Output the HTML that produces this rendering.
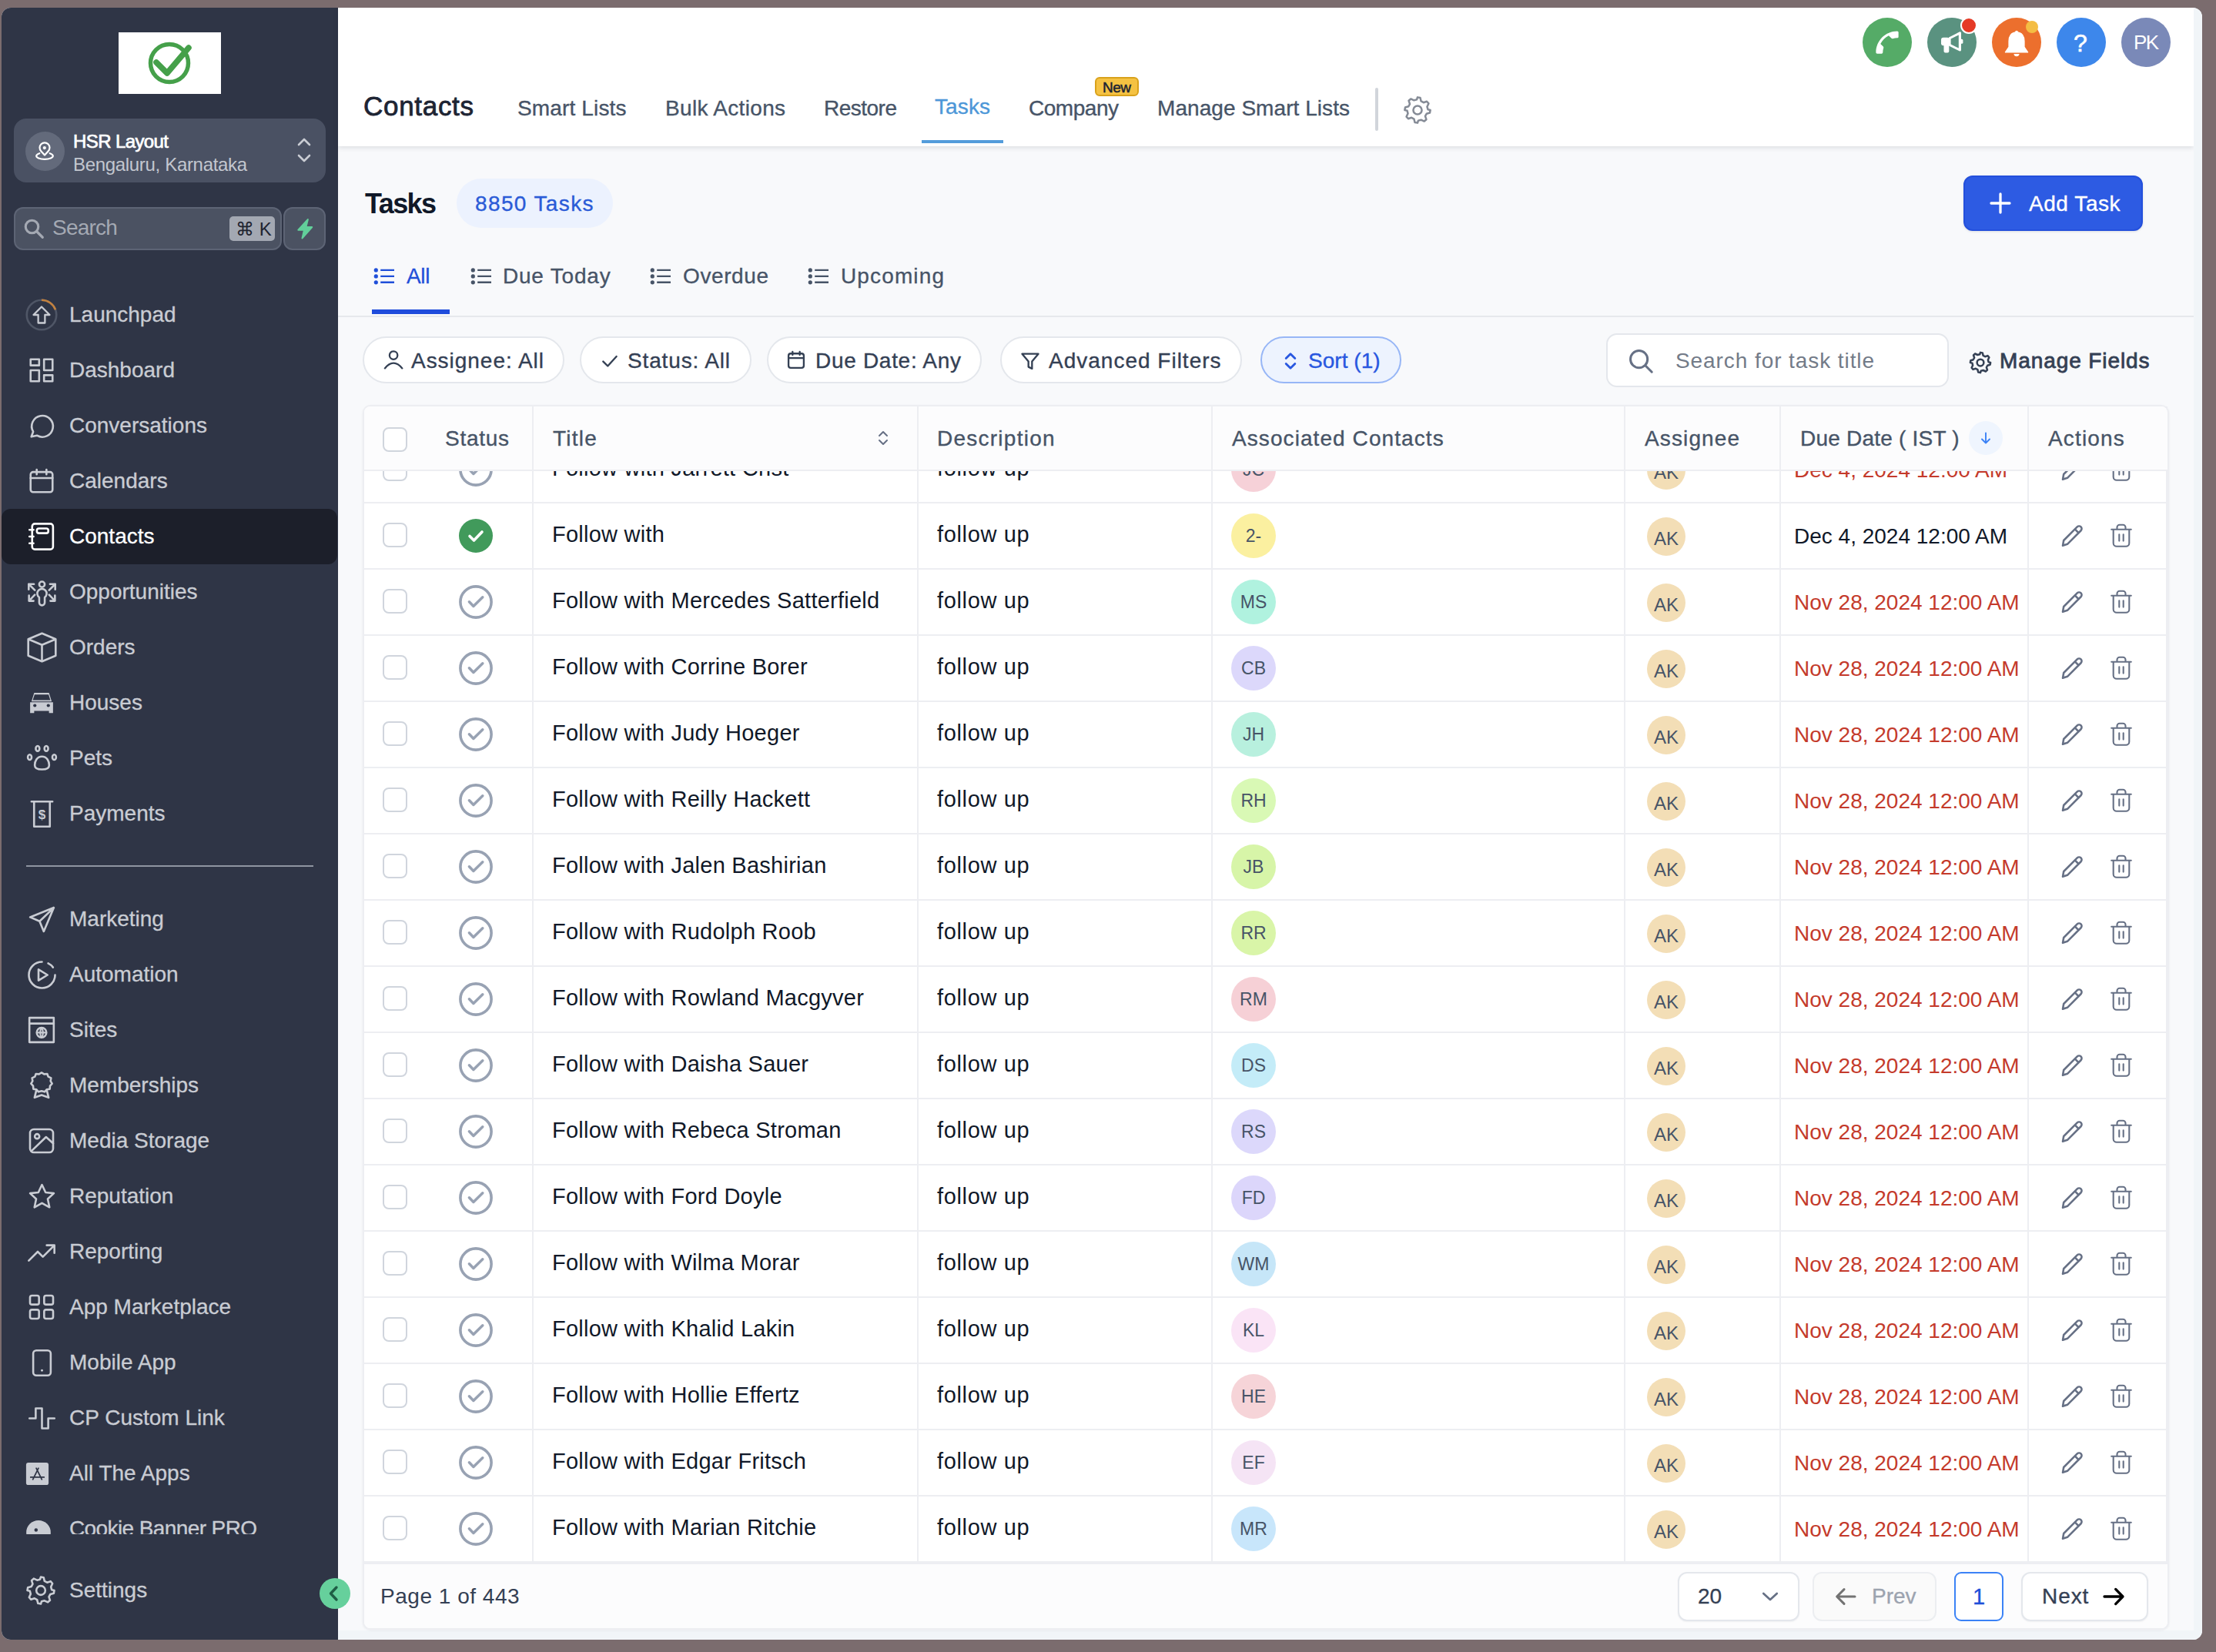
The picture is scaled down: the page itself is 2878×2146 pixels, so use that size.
<!DOCTYPE html>
<html><head><meta charset="utf-8"><title>Tasks</title>
<style>
*{box-sizing:border-box;margin:0;padding:0}
html,body{width:2878px;height:2146px;overflow:hidden;background:#7b6c6e;font-family:"Liberation Sans", sans-serif}
.win{position:absolute;left:2px;top:10px;width:2858px;height:2120px;border-radius:12px;overflow:hidden;background:#f8f9fb}
.in{position:absolute;left:-2px;top:-10px;width:2878px;height:2146px}
.b{position:absolute}
.t{position:absolute;white-space:nowrap}
svg.b{overflow:visible}
</style></head><body>
<div class="win"><div class="in">
<div class="b" style="left:2px;top:10px;width:437px;height:2120px;background:#2f3546"></div><div class="b" style="left:154px;top:42px;width:133px;height:80px;background:#fff"></div><svg class="b" style="left:186px;top:52px;" width="68" height="60" viewBox="0 0 68 60" fill="none"><circle cx="34" cy="30" r="24.5" stroke="#45a04a" stroke-width="5.5"/><path d="M17 29 L31 43 L59 10" stroke="#45a04a" stroke-width="7.5" stroke-linecap="round" stroke-linejoin="round"/></svg><div class="b" style="left:18px;top:154px;width:405px;height:83px;background:#4a5163;border-radius:16px"></div><div class="b" style="left:33px;top:171px;width:51px;height:51px;background:#636a7b;border-radius:50%"></div><svg class="b" style="left:33px;top:170px;" width="51" height="51" viewBox="0 0 51 51" fill="none"><path d="M25 31.5 L20.4 26.4 A6.5 6.5 0 1 1 29.6 26.4 Z" stroke="#fff" stroke-width="2.2" stroke-linejoin="round"/><circle cx="24.8" cy="22.1" r="2.1" fill="#fff"/><path d="M18.3 29.2 A10.8 4.3 0 1 0 31.7 29.2" stroke="#fff" stroke-width="2.2" stroke-linecap="round"/></svg><div class="t" style="left:95px;top:171.7px;font-size:24px;line-height:24px;color:#ffffff;font-weight:400;letter-spacing:-0.6px;-webkit-text-stroke:0.7px #ffffff;">HSR Layout</div><div class="t" style="left:95px;top:201.7px;font-size:24px;line-height:24px;color:#c3c7cf;font-weight:400;letter-spacing:-0.32px;">Bengaluru, Karnataka</div><svg class="b" style="left:384px;top:175px;" width="22" height="40" viewBox="0 0 22 40" fill="none"><path d="M4 13 L11 6 L18 13" stroke="#c9ccd3" stroke-width="2.6" stroke-linecap="round" stroke-linejoin="round"/><path d="M4 27 L11 34 L18 27" stroke="#c9ccd3" stroke-width="2.6" stroke-linecap="round" stroke-linejoin="round"/></svg><div class="b" style="left:18px;top:269px;width:348px;height:56px;background:#4b5262;border:2px solid #5d6475;border-radius:12px"></div><svg class="b" style="left:29px;top:282px;" width="30" height="30" viewBox="0 0 24 24" fill="none"><circle cx="10" cy="10" r="6.6" stroke="#a4a9b3" stroke-width="2.5"/><path d="M15 15 L21 21" stroke="#a4a9b3" stroke-width="2.6" stroke-linecap="round"/></svg><div class="t" style="left:68px;top:282.3px;font-size:28px;line-height:28px;color:#a4a9b3;font-weight:400;letter-spacing:-0.8px;">Search</div><div class="b" style="left:298px;top:281px;width:59px;height:32px;background:#a3a8b2;border-radius:5px"></div><div class="t" style="left:306px;top:285.7px;font-size:24px;line-height:24px;color:#1f2430;font-weight:400;letter-spacing:0px;">&#8984; K</div><div class="b" style="left:368px;top:269px;width:55px;height:56px;background:#4b5262;border:2px solid #5d6475;border-radius:12px"></div><svg class="b" style="left:383px;top:283px;" width="26" height="28" viewBox="0 0 24 26" fill="none"><path d="M15.5 2 L4 14.5 H11.2 L8.8 24.5 L20.5 11.2 H13.2 Z" fill="#62cf9a" stroke="#62cf9a" stroke-width="2" stroke-linejoin="round"/></svg><div class="b" style="left:2px;top:661px;width:436px;height:72px;background:#1c1f2a;border-radius:12px"></div><svg class="b" style="left:33.0px;top:388.0px;" width="42" height="42" viewBox="0 0 24 24" fill="none"><circle cx="12" cy="12" r="11" stroke="#4f5666" stroke-width="1.5"/><path d="M12 1 A11 11 0 0 1 22.3 8.2" stroke="#c2813f" stroke-width="1.5"/><path d="M12 6 L18 12 H14.5 V18 H9.5 V12 H6 Z" stroke="#c9ccd3" stroke-width="1.3" stroke-linejoin="round"/></svg><div class="t" style="left:90px;top:395.3px;font-size:28px;line-height:28px;color:#c9ccd3;font-weight:400;letter-spacing:0px;-webkit-text-stroke:0.3px #c9ccd3;">Launchpad</div><svg class="b" style="left:35.0px;top:462.0px;" width="38" height="38" viewBox="0 0 24 24" fill="none"><rect x="3" y="3" width="7" height="5" stroke="#c9ccd3" stroke-width="1.64" stroke-linecap="round" stroke-linejoin="round"/><rect x="14" y="3" width="7" height="9" stroke="#c9ccd3" stroke-width="1.64" stroke-linecap="round" stroke-linejoin="round"/><rect x="3" y="12" width="7" height="9" stroke="#c9ccd3" stroke-width="1.64" stroke-linecap="round" stroke-linejoin="round"/><rect x="14" y="16" width="7" height="5" stroke="#c9ccd3" stroke-width="1.64" stroke-linecap="round" stroke-linejoin="round"/></svg><div class="t" style="left:90px;top:467.3px;font-size:28px;line-height:28px;color:#c9ccd3;font-weight:400;letter-spacing:0px;-webkit-text-stroke:0.3px #c9ccd3;">Dashboard</div><svg class="b" style="left:34.5px;top:533.5px;" width="39" height="39" viewBox="0 0 24 24" fill="none"><path d="M3.5 20.5 L5 16.5 A8.5 8.5 0 1 1 8 19.5 Z" stroke="#c9ccd3" stroke-width="1.6" stroke-linecap="round" stroke-linejoin="round"/></svg><div class="t" style="left:90px;top:539.3px;font-size:28px;line-height:28px;color:#c9ccd3;font-weight:400;letter-spacing:0px;-webkit-text-stroke:0.3px #c9ccd3;">Conversations</div><svg class="b" style="left:35.0px;top:606.0px;" width="38" height="38" viewBox="0 0 24 24" fill="none"><rect x="3" y="4.5" width="18" height="16.5" rx="2" stroke="#c9ccd3" stroke-width="1.64" stroke-linecap="round" stroke-linejoin="round"/><path d="M3 9.5 H21 M8 2.5 V6.5 M16 2.5 V6.5" stroke="#c9ccd3" stroke-width="1.64" stroke-linecap="round" stroke-linejoin="round"/></svg><div class="t" style="left:90px;top:611.3px;font-size:28px;line-height:28px;color:#c9ccd3;font-weight:400;letter-spacing:0px;-webkit-text-stroke:0.3px #c9ccd3;">Calendars</div><svg class="b" style="left:33.0px;top:676.0px;" width="42" height="42" viewBox="0 0 24 24" fill="none"><rect x="5" y="2.5" width="15.5" height="19" rx="2" stroke="#ffffff" stroke-width="1.49" stroke-linecap="round" stroke-linejoin="round"/><rect x="8.5" y="6" width="8.5" height="3.5" rx="1.5" stroke="#ffffff" stroke-width="1.49" stroke-linecap="round" stroke-linejoin="round"/><path d="M3 7 H6 M3 12 H6 M3 17 H6" stroke="#ffffff" stroke-width="1.49" stroke-linecap="round" stroke-linejoin="round"/></svg><div class="t" style="left:90px;top:683.3px;font-size:28px;line-height:28px;color:#ffffff;font-weight:400;letter-spacing:0px;-webkit-text-stroke:0.3px #ffffff;">Contacts</div><svg class="b" style="left:32.5px;top:747.5px;" width="43" height="43" viewBox="0 0 24 24" fill="none"><circle cx="12" cy="6.2" r="2" stroke="#c9ccd3" stroke-width="1.45" stroke-linecap="round" stroke-linejoin="round"/><path d="M10 15.6 A3.4 3.4 0 1 1 14 15.6 V19.4 A2 2 0 0 1 10 19.4 Z" stroke="#c9ccd3" stroke-width="1.45" stroke-linecap="round" stroke-linejoin="round"/><path d="M12 14.2 V19" stroke="#2f3546" stroke-width="0.9"/><path d="M2.4 6 L6.8 10.4 M2.4 9.9 V6 H6.2 M21.6 6 L17.2 10.4 M21.6 9.9 V6 H17.8 M2.6 18.2 L6.8 13.8 M2.6 14.2 V18.2 H5.9 M21.4 18.2 L17.2 13.8 M21.4 14.2 V18.2 H18.1" stroke="#c9ccd3" stroke-width="1.45" stroke-linecap="round" stroke-linejoin="round"/></svg><div class="t" style="left:90px;top:755.3px;font-size:28px;line-height:28px;color:#c9ccd3;font-weight:400;letter-spacing:0px;-webkit-text-stroke:0.3px #c9ccd3;">Opportunities</div><svg class="b" style="left:31.5px;top:818.5px;" width="45" height="45" viewBox="0 0 24 24" fill="none"><path d="M12 2 L21.5 6 V17.5 L12 21.5 L2.5 17.5 V6 Z M2.5 6 L12 10 L21.5 6 M12 10 V21.5" stroke="#c9ccd3" stroke-width="1.39" stroke-linecap="round" stroke-linejoin="round"/></svg><div class="t" style="left:90px;top:827.3px;font-size:28px;line-height:28px;color:#c9ccd3;font-weight:400;letter-spacing:0px;-webkit-text-stroke:0.3px #c9ccd3;">Orders</div><svg class="b" style="left:33.0px;top:892.0px;" width="42" height="42" viewBox="0 0 24 24" fill="none"><path d="M4.5 11 L6.5 4.5 H17.5 L19.5 11 Z" fill="#c9ccd3"/><path d="M3.5 11.5 H20.5 V19.5 H17.5 V18 H6.5 V19.5 H3.5 Z" fill="#c9ccd3"/><path d="M6.8 5.8 H17.2 L18.5 10 H5.5 Z" fill="#2f3546"/><circle cx="7" cy="14" r="1.2" fill="#2f3546"/><circle cx="17" cy="14" r="1.2" fill="#2f3546"/></svg><div class="t" style="left:90px;top:899.3px;font-size:28px;line-height:28px;color:#c9ccd3;font-weight:400;letter-spacing:0px;-webkit-text-stroke:0.3px #c9ccd3;">Houses</div><svg class="b" style="left:31.5px;top:962.5px;" width="45" height="45" viewBox="0 0 24 24" fill="none"><ellipse cx="9" cy="5" rx="1.3" ry="1.8" stroke="#c9ccd3" stroke-width="1.39" stroke-linecap="round" stroke-linejoin="round"/><ellipse cx="15" cy="5" rx="1.3" ry="1.8" stroke="#c9ccd3" stroke-width="1.39" stroke-linecap="round" stroke-linejoin="round"/><ellipse cx="3.5" cy="11" rx="1.3" ry="1.8" stroke="#c9ccd3" stroke-width="1.39" stroke-linecap="round" stroke-linejoin="round"/><ellipse cx="20.5" cy="11" rx="1.3" ry="1.8" stroke="#c9ccd3" stroke-width="1.39" stroke-linecap="round" stroke-linejoin="round"/><path d="M12 10.5 C8.5 10.5 7 14 7 16.5 C7 18.5 9 19.5 12 19.5 C15 19.5 17 18.5 17 16.5 C17 14 15.5 10.5 12 10.5 Z" stroke="#c9ccd3" stroke-width="1.39" stroke-linecap="round" stroke-linejoin="round"/></svg><div class="t" style="left:90px;top:971.3px;font-size:28px;line-height:28px;color:#c9ccd3;font-weight:400;letter-spacing:0px;-webkit-text-stroke:0.3px #c9ccd3;">Pets</div><svg class="b" style="left:33.5px;top:1036.5px;" width="41" height="41" viewBox="0 0 24 24" fill="none"><path d="M4 2.5 H20 M6 2.5 V21.5 H18 V2.5" stroke="#c9ccd3" stroke-width="1.52" stroke-linecap="round" stroke-linejoin="round"/><text x="12" y="16" text-anchor="middle" font-size="10" font-weight="700" fill="#c9ccd3" font-family="Liberation Sans">$</text></svg><div class="t" style="left:90px;top:1043.3px;font-size:28px;line-height:28px;color:#c9ccd3;font-weight:400;letter-spacing:0px;-webkit-text-stroke:0.3px #c9ccd3;">Payments</div><div class="b" style="left:34px;top:1124px;width:373px;height:2px;background:#8f95a1"></div><div class="b" style="left:0;top:0;width:439px;height:1993px;overflow:hidden"><svg class="b" style="left:35.5px;top:1175.5px;" width="37" height="37" viewBox="0 0 24 24" fill="none"><path d="M22 2 L2 10 L10 13.5 L13.5 22 Z M10 13.5 L22 2" stroke="#c9ccd3" stroke-width="1.69" stroke-linecap="round" stroke-linejoin="round"/></svg><div class="t" style="left:90px;top:1180.3px;font-size:28px;line-height:28px;color:#c9ccd3;font-weight:400;letter-spacing:0px;-webkit-text-stroke:0.3px #c9ccd3;">Marketing</div><svg class="b" style="left:32.5px;top:1244.5px;" width="43" height="43" viewBox="0 0 24 24" fill="none"><path d="M21.5 12 A9.5 9.5 0 1 1 12 2.5" stroke="#c9ccd3" stroke-width="1.45" stroke-linecap="round" stroke-linejoin="round"/><path d="M16.5 3.6 A9.5 9.5 0 0 1 20 6.5" stroke="#c9ccd3" stroke-width="1.45" stroke-linecap="round" stroke-linejoin="round"/><path d="M9.5 8 L16 12 L9.5 16 Z" stroke="#c9ccd3" stroke-width="1.45" stroke-linecap="round" stroke-linejoin="round"/></svg><div class="t" style="left:90px;top:1252.3px;font-size:28px;line-height:28px;color:#c9ccd3;font-weight:400;letter-spacing:0px;-webkit-text-stroke:0.3px #c9ccd3;">Automation</div><svg class="b" style="left:34.0px;top:1318.0px;" width="40" height="40" viewBox="0 0 24 24" fill="none"><rect x="2.5" y="2.5" width="19" height="19" stroke="#c9ccd3" stroke-width="1.56" stroke-linecap="round" stroke-linejoin="round"/><path d="M2.5 7 H21.5" stroke="#c9ccd3" stroke-width="1.56" stroke-linecap="round" stroke-linejoin="round"/><circle cx="12" cy="14" r="3.8" stroke="#c9ccd3" stroke-width="1.5"/><path d="M8.2 14 H15.8 M12 10.2 C10.5 12 10.5 16 12 17.8 C13.5 16 13.5 12 12 10.2" stroke="#c9ccd3" stroke-width="1.3"/></svg><div class="t" style="left:90px;top:1324.3px;font-size:28px;line-height:28px;color:#c9ccd3;font-weight:400;letter-spacing:0px;-webkit-text-stroke:0.3px #c9ccd3;">Sites</div><svg class="b" style="left:34.0px;top:1390.0px;" width="40" height="40" viewBox="0 0 24 24" fill="none"><path d="M12 2 L14 3.2 L16.4 3 L17.2 5.2 L19.4 6.2 L19 8.6 L20.2 10.6 L18.6 12.4 L18.4 14.8 L16 15.2 L14.4 17 L12 16.4 L9.6 17 L8 15.2 L5.6 14.8 L5.4 12.4 L3.8 10.6 L5 8.6 L4.6 6.2 L6.8 5.2 L7.6 3 L10 3.2 Z" stroke="#c9ccd3" stroke-width="1.56" stroke-linecap="round" stroke-linejoin="round"/><path d="M8 15.5 L6.5 21.5 L12 19.5 L17.5 21.5 L16 15.5" stroke="#c9ccd3" stroke-width="1.56" stroke-linecap="round" stroke-linejoin="round"/></svg><div class="t" style="left:90px;top:1396.3px;font-size:28px;line-height:28px;color:#c9ccd3;font-weight:400;letter-spacing:0px;-webkit-text-stroke:0.3px #c9ccd3;">Memberships</div><svg class="b" style="left:34.0px;top:1462.0px;" width="40" height="40" viewBox="0 0 24 24" fill="none"><rect x="3" y="3" width="18" height="18" rx="3" stroke="#c9ccd3" stroke-width="1.56" stroke-linecap="round" stroke-linejoin="round"/><circle cx="8.5" cy="8.5" r="1.8" stroke="#c9ccd3" stroke-width="1.56" stroke-linecap="round" stroke-linejoin="round"/><path d="M4 20 L15.5 9 L21 14" stroke="#c9ccd3" stroke-width="1.56" stroke-linecap="round" stroke-linejoin="round"/></svg><div class="t" style="left:90px;top:1468.3px;font-size:28px;line-height:28px;color:#c9ccd3;font-weight:400;letter-spacing:0px;-webkit-text-stroke:0.3px #c9ccd3;">Media Storage</div><svg class="b" style="left:34.5px;top:1534.5px;" width="39" height="39" viewBox="0 0 24 24" fill="none"><path d="M12 2.5 L14.9 8.6 L21.5 9.3 L16.6 13.8 L18 20.5 L12 17.1 L6 20.5 L7.4 13.8 L2.5 9.3 L9.1 8.6 Z" stroke="#c9ccd3" stroke-width="1.6" stroke-linecap="round" stroke-linejoin="round"/></svg><div class="t" style="left:90px;top:1540.3px;font-size:28px;line-height:28px;color:#c9ccd3;font-weight:400;letter-spacing:0px;-webkit-text-stroke:0.3px #c9ccd3;">Reputation</div><svg class="b" style="left:34.0px;top:1606.0px;" width="40" height="40" viewBox="0 0 24 24" fill="none"><path d="M2 19 L9 12 L13 16 L22 7 M16 7 H22 V13" stroke="#c9ccd3" stroke-width="1.56" stroke-linecap="round" stroke-linejoin="round"/></svg><div class="t" style="left:90px;top:1612.3px;font-size:28px;line-height:28px;color:#c9ccd3;font-weight:400;letter-spacing:0px;-webkit-text-stroke:0.3px #c9ccd3;">Reporting</div><svg class="b" style="left:34.0px;top:1678.0px;" width="40" height="40" viewBox="0 0 24 24" fill="none"><rect x="3" y="3" width="7" height="7" rx="1.5" stroke="#c9ccd3" stroke-width="1.56" stroke-linecap="round" stroke-linejoin="round"/><rect x="14" y="3" width="7" height="7" rx="1.5" stroke="#c9ccd3" stroke-width="1.56" stroke-linecap="round" stroke-linejoin="round"/><rect x="3" y="14" width="7" height="7" rx="1.5" stroke="#c9ccd3" stroke-width="1.56" stroke-linecap="round" stroke-linejoin="round"/><rect x="14" y="14" width="7" height="7" rx="1.5" stroke="#c9ccd3" stroke-width="1.56" stroke-linecap="round" stroke-linejoin="round"/></svg><div class="t" style="left:90px;top:1684.3px;font-size:28px;line-height:28px;color:#c9ccd3;font-weight:400;letter-spacing:0px;-webkit-text-stroke:0.3px #c9ccd3;">App Marketplace</div><svg class="b" style="left:34.5px;top:1750.5px;" width="39" height="39" viewBox="0 0 24 24" fill="none"><rect x="5" y="2" width="14" height="20" rx="2.5" stroke="#c9ccd3" stroke-width="1.6" stroke-linecap="round" stroke-linejoin="round"/><circle cx="12" cy="18" r="0.9" fill="#c9ccd3"/></svg><div class="t" style="left:90px;top:1756.3px;font-size:28px;line-height:28px;color:#c9ccd3;font-weight:400;letter-spacing:0px;-webkit-text-stroke:0.3px #c9ccd3;">Mobile App</div><svg class="b" style="left:34.5px;top:1822.5px;" width="39" height="39" viewBox="0 0 24 24" fill="none"><path d="M2 12 H7 V4 H12 V20 H17 V12 H22" stroke="#c9ccd3" stroke-width="1.6" stroke-linecap="round" stroke-linejoin="round"/></svg><div class="t" style="left:90px;top:1828.3px;font-size:28px;line-height:28px;color:#c9ccd3;font-weight:400;letter-spacing:0px;-webkit-text-stroke:0.3px #c9ccd3;">CP Custom Link</div><svg class="b" style="left:30.5px;top:1896.5px;" width="35" height="35" viewBox="0 0 24 24" fill="none"><rect x="2" y="2" width="20" height="20" rx="2" fill="#c9ccd3"/><path d="M8 17 L13 7 M11 7 L16 17 M6 15 H18" stroke="#2f3546" stroke-width="1.2" stroke-linecap="round"/></svg><div class="t" style="left:90px;top:1900.3px;font-size:28px;line-height:28px;color:#c9ccd3;font-weight:400;letter-spacing:0px;-webkit-text-stroke:0.3px #c9ccd3;">All The Apps</div><svg class="b" style="left:31.0px;top:1967.0px;" width="38" height="38" viewBox="0 0 24 24" fill="none"><circle cx="12" cy="15" r="10" fill="#c9ccd3"/><circle cx="10" cy="13" r="1.4" fill="#2f3546"/><circle cx="16" cy="18" r="1.4" fill="#2f3546"/><circle cx="7" cy="19.5" r="1.3" fill="#2f3546"/></svg><div class="t" style="left:90px;top:1972.3px;font-size:28px;line-height:28px;color:#c9ccd3;font-weight:400;letter-spacing:-0.6px;-webkit-text-stroke:0.3px #c9ccd3;">Cookie Banner PRO</div></div><svg class="b" style="left:33.0px;top:2046.0px;" width="40" height="40" viewBox="0 0 24 24" fill="none"><path d="M12 1.5 L14.2 1.9 L14.9 4.7 L16.9 5.8 L19.6 4.9 L21.1 6.6 L19.9 9.2 L20.5 11.5 L22.5 12 L22.1 14.2 L19.4 15 L18.3 17 L19.2 19.7 L17.5 21.2 L14.9 20 L12.6 20.6 L12 22.5 L9.8 22.1 L9.1 19.3 L7.1 18.2 L4.4 19.1 L2.9 17.4 L4.1 14.8 L3.5 12.5 L1.5 12 L1.9 9.8 L4.6 9 L5.7 7 L4.8 4.3 L6.5 2.8 L9.1 4 L11.4 3.4 Z" stroke="#c9ccd3" stroke-width="1.56" stroke-linecap="round" stroke-linejoin="round"/><circle cx="12" cy="12" r="3.5" stroke="#c9ccd3" stroke-width="1.56" stroke-linecap="round" stroke-linejoin="round"/></svg><div class="t" style="left:90px;top:2052.3px;font-size:28px;line-height:28px;color:#c9ccd3;font-weight:400;letter-spacing:0px;-webkit-text-stroke:0.3px #c9ccd3;">Settings</div><div class="b" style="left:439px;top:10px;width:2410px;height:180px;background:#fff;box-shadow:0 2px 6px rgba(16,24,40,.12)"></div><div class="t" style="left:472px;top:120.4px;font-size:35px;line-height:35px;color:#1d2433;font-weight:400;letter-spacing:0.7px;-webkit-text-stroke:0.8px #1d2433;">Contacts</div><div class="t" style="left:672px;top:127.3px;font-size:28px;line-height:28px;color:#475467;font-weight:400;letter-spacing:0.15px;-webkit-text-stroke:0.35px #475467;">Smart Lists</div><div class="t" style="left:864px;top:127.3px;font-size:28px;line-height:28px;color:#475467;font-weight:400;letter-spacing:0.32px;-webkit-text-stroke:0.35px #475467;">Bulk Actions</div><div class="t" style="left:1070px;top:127.3px;font-size:28px;line-height:28px;color:#475467;font-weight:400;letter-spacing:-0.51px;-webkit-text-stroke:0.35px #475467;">Restore</div><div class="t" style="left:1214px;top:125.3px;font-size:28px;line-height:28px;color:#4d97d8;font-weight:400;letter-spacing:0.11px;-webkit-text-stroke:0.35px #4d97d8;">Tasks</div><div class="b" style="left:1197px;top:182px;width:106px;height:4px;background:#539cdb"></div><div class="t" style="left:1336px;top:127.3px;font-size:28px;line-height:28px;color:#475467;font-weight:400;letter-spacing:-0.47px;-webkit-text-stroke:0.35px #475467;">Company</div><div class="b" style="left:1422px;top:100px;width:57px;height:25px;background:#f5c242;border:2px solid #d9a21b;border-radius:6px"></div><div class="t" style="left:1432px;top:103.9px;font-size:19px;line-height:19px;color:#1d2433;font-weight:400;letter-spacing:-0.51px;-webkit-text-stroke:0.5px #1d2433;">New</div><div class="t" style="left:1503px;top:127.3px;font-size:28px;line-height:28px;color:#475467;font-weight:400;letter-spacing:0.06px;-webkit-text-stroke:0.35px #475467;">Manage Smart Lists</div><div class="b" style="left:1786px;top:114px;width:4px;height:56px;background:#d1d5db;border-radius:2px"></div><svg class="b" style="left:1822px;top:124px;" width="38" height="38" viewBox="0 0 24 24" fill="none"><path d="M12 1.5 L14.2 1.9 L14.9 4.7 L16.9 5.8 L19.6 4.9 L21.1 6.6 L19.9 9.2 L20.5 11.5 L22.5 12 L22.1 14.2 L19.4 15 L18.3 17 L19.2 19.7 L17.5 21.2 L14.9 20 L12.6 20.6 L12 22.5 L9.8 22.1 L9.1 19.3 L7.1 18.2 L4.4 19.1 L2.9 17.4 L4.1 14.8 L3.5 12.5 L1.5 12 L1.9 9.8 L4.6 9 L5.7 7 L4.8 4.3 L6.5 2.8 L9.1 4 L11.4 3.4 Z" stroke="#858b96" stroke-width="1.6" stroke-linecap="round" stroke-linejoin="round"/><circle cx="12" cy="12" r="3.5" stroke="#858b96" stroke-width="1.6" stroke-linecap="round" stroke-linejoin="round"/></svg><div class="b" style="left:2419px;top:23px;width:64px;height:64px;background:#55ab67;border-radius:50%"></div><div class="b" style="left:2503px;top:23px;width:64px;height:64px;background:#5a9280;border-radius:50%"></div><div class="b" style="left:2587px;top:23px;width:64px;height:64px;background:#ec6f2d;border-radius:50%"></div><div class="b" style="left:2671px;top:23px;width:64px;height:64px;background:#3d87eb;border-radius:50%"></div><div class="b" style="left:2755px;top:23px;width:64px;height:64px;background:#7a89b8;border-radius:50%"></div><svg class="b" style="left:2426px;top:30px;" width="50" height="50" viewBox="0 0 24 24" fill="none"><g transform="rotate(90 12 12)"><path d="M6.62 10.79c1.44 2.83 3.76 5.14 6.59 6.59l2.2-2.2c.27-.27.67-.36 1.02-.24 1.12.37 2.33.57 3.57.57.55 0 1 .45 1 1V20c0 .55-.45 1-1 1-9.39 0-17-7.61-17-17 0-.55.45-1 1-1h3.5c.55 0 1 .45 1 1 0 1.25.2 2.45.57 3.57.11.35.03.74-.25 1.02l-2.2 2.2z" fill="#fff" transform="translate(12 12) scale(0.78) translate(-12 -12)"/></g></svg><svg class="b" style="left:2515px;top:38px;" width="40" height="34" viewBox="0 0 40 34" fill="none"><rect x="6" y="10.8" width="11" height="10.4" rx="3" fill="#fff"/><rect x="9.5" y="18" width="6.8" height="12.6" rx="2" fill="#fff"/><path d="M16 10.6 L29.6 3.6 Q32 2.4 32 5 V26.8 Q32 29.4 29.6 28.2 L16 21.4 Z" fill="#fff"/><path d="M18.6 12.4 L28.8 7.4 V24.6 L18.6 19.6 Z" fill="#5a9280"/><rect x="31" y="12.8" width="3.4" height="6" rx="1.6" fill="#fff"/></svg><div class="b" style="left:2546px;top:22px;width:22px;height:22px;background:#e53a26;border-radius:50%;border:2px solid #fff"></div><svg class="b" style="left:2594px;top:36px;overflow:visible" preserveAspectRatio="none" width="50" height="44" viewBox="0 0 24 24" fill="none"><path d="M12 3.2 C8.6 3.2 7.2 6.2 7.2 9.5 V13.6 L5 17.4 H19 L16.8 13.6 V9.5 C16.8 6.2 15.4 3.2 12 3.2 Z" fill="#fff" stroke="#fff" stroke-width="0.6" stroke-linejoin="round"/><path d="M10.3 18.6 H13.7 A1.7 1.7 0 0 1 10.3 18.6Z" fill="#fff"/><circle cx="12" cy="2.9" r="0.9" fill="#fff"/></svg><div class="b" style="left:2631px;top:27px;width:16px;height:16px;background:#f4bd43;border-radius:50%"></div><div class="t" style="left:2693px;top:39.9px;font-size:32px;line-height:32px;color:#fff;font-weight:400;letter-spacing:0px;-webkit-text-stroke:0.6px #fff;">?</div><div class="t" style="left:2771px;top:42.0px;font-size:26px;line-height:26px;color:#fff;font-weight:400;letter-spacing:-1.69px;">PK</div><div class="b" style="left:2849px;top:10px;width:11px;height:2120px;background:#f1f5f8"></div><div class="b" style="left:439px;top:2118px;width:2421px;height:12px;background:#f1f5f8"></div><div class="t" style="left:474px;top:246.5px;font-size:36px;line-height:36px;color:#101828;font-weight:700;letter-spacing:-1.6px;">Tasks</div><div class="b" style="left:593px;top:232px;width:203px;height:64px;background:#ecf2fe;border-radius:32px"></div><div class="t" style="left:617px;top:251.3px;font-size:28px;line-height:28px;color:#2a5bd7;font-weight:400;letter-spacing:1.38px;-webkit-text-stroke:0.35px #2a5bd7;">8850 Tasks</div><div class="b" style="left:2550px;top:228px;width:233px;height:72px;background:#2d5be3;border:2px solid #2450dc;border-radius:12px;box-shadow:0 1px 3px rgba(16,24,40,.12)"></div><svg class="b" style="left:2580px;top:246px;" width="36" height="36" viewBox="0 0 24 24" fill="none"><path d="M12 4 V20 M4 12 H20" stroke="#fff" stroke-width="2.2" stroke-linecap="round"/></svg><div class="t" style="left:2635px;top:251.3px;font-size:28px;line-height:28px;color:#fff;font-weight:400;letter-spacing:0.56px;-webkit-text-stroke:0.35px #fff;">Add Task</div><svg class="b" style="left:482px;top:344px;" width="32" height="30" viewBox="0 0 32 30" fill="none"><circle cx="6.3" cy="6.9" r="2.6" fill="#1f4fd9"/><circle cx="6.3" cy="14.9" r="2.6" fill="#1f4fd9"/><circle cx="6.3" cy="22.8" r="2.6" fill="#1f4fd9"/><path d="M12.2 6.9 H30 M12.2 14.9 H30 M12.2 22.8 H30" stroke="#1f4fd9" stroke-width="2.4"/></svg><div class="t" style="left:528px;top:345.3px;font-size:28px;line-height:28px;color:#1f4fd9;font-weight:400;letter-spacing:-0.31px;-webkit-text-stroke:0.3px #1f4fd9;">All</div><svg class="b" style="left:608px;top:344px;" width="32" height="30" viewBox="0 0 32 30" fill="none"><circle cx="6.3" cy="6.9" r="2.6" fill="#475467"/><circle cx="6.3" cy="14.9" r="2.6" fill="#475467"/><circle cx="6.3" cy="22.8" r="2.6" fill="#475467"/><path d="M12.2 6.9 H30 M12.2 14.9 H30 M12.2 22.8 H30" stroke="#475467" stroke-width="2.4"/></svg><div class="t" style="left:653px;top:345.3px;font-size:28px;line-height:28px;color:#475467;font-weight:400;letter-spacing:0.79px;-webkit-text-stroke:0.3px #475467;">Due Today</div><svg class="b" style="left:841px;top:344px;" width="32" height="30" viewBox="0 0 32 30" fill="none"><circle cx="6.3" cy="6.9" r="2.6" fill="#475467"/><circle cx="6.3" cy="14.9" r="2.6" fill="#475467"/><circle cx="6.3" cy="22.8" r="2.6" fill="#475467"/><path d="M12.2 6.9 H30 M12.2 14.9 H30 M12.2 22.8 H30" stroke="#475467" stroke-width="2.4"/></svg><div class="t" style="left:887px;top:345.3px;font-size:28px;line-height:28px;color:#475467;font-weight:400;letter-spacing:0.6px;-webkit-text-stroke:0.3px #475467;">Overdue</div><svg class="b" style="left:1046px;top:344px;" width="32" height="30" viewBox="0 0 32 30" fill="none"><circle cx="6.3" cy="6.9" r="2.6" fill="#475467"/><circle cx="6.3" cy="14.9" r="2.6" fill="#475467"/><circle cx="6.3" cy="22.8" r="2.6" fill="#475467"/><path d="M12.2 6.9 H30 M12.2 14.9 H30 M12.2 22.8 H30" stroke="#475467" stroke-width="2.4"/></svg><div class="t" style="left:1092px;top:345.3px;font-size:28px;line-height:28px;color:#475467;font-weight:400;letter-spacing:1.13px;-webkit-text-stroke:0.3px #475467;">Upcoming</div><div class="b" style="left:439px;top:410px;width:2410px;height:2px;background:#e6e8ec"></div><div class="b" style="left:483px;top:402px;width:101px;height:6px;background:#1f4cdc"></div><div class="b" style="left:471px;top:437px;width:262px;height:61px;background:#fff;border:2px solid #e4e7ec;border-radius:31px;"></div><svg class="b" style="left:496px;top:454px;" width="30" height="30" viewBox="0 0 30 30" fill="none"><circle cx="15.1" cy="7.6" r="5.2" stroke="#344054" stroke-width="2.3"/><path d="M3.9 24.4 Q15.1 10.8 26.3 24.4" stroke="#344054" stroke-width="2.3" stroke-linecap="round"/></svg><div class="t" style="left:534px;top:455.3px;font-size:28px;line-height:28px;color:#344054;font-weight:400;letter-spacing:0.97px;-webkit-text-stroke:0.35px #344054;">Assignee: All</div><div class="b" style="left:753px;top:437px;width:223px;height:61px;background:#fff;border:2px solid #e4e7ec;border-radius:31px;"></div><svg class="b" style="left:779px;top:456px;" width="26" height="26" viewBox="0 0 24 24" fill="none"><path d="M4 12.5 L9.5 18 L20 6.5" stroke="#344054" stroke-width="2.2" stroke-linecap="round" stroke-linejoin="round"/></svg><div class="t" style="left:815px;top:455.3px;font-size:28px;line-height:28px;color:#344054;font-weight:400;letter-spacing:0.85px;-webkit-text-stroke:0.35px #344054;">Status: All</div><div class="b" style="left:996px;top:437px;width:279px;height:61px;background:#fff;border:2px solid #e4e7ec;border-radius:31px;"></div><svg class="b" style="left:1020px;top:454px;" width="28" height="28" viewBox="0 0 24 24" fill="none"><rect x="3.5" y="4.5" width="17" height="16" rx="2.5" stroke="#344054" stroke-width="2"/><path d="M3.5 9.5 H20.5 M8 2.5 V6 M16 2.5 V6" stroke="#344054" stroke-width="2" stroke-linecap="round"/></svg><div class="t" style="left:1059px;top:455.3px;font-size:28px;line-height:28px;color:#344054;font-weight:400;letter-spacing:0.7px;-webkit-text-stroke:0.35px #344054;">Due Date: Any</div><div class="b" style="left:1299px;top:437px;width:314px;height:61px;background:#fff;border:2px solid #e4e7ec;border-radius:31px;"></div><svg class="b" style="left:1324px;top:455px;" width="28" height="28" viewBox="0 0 24 24" fill="none"><path d="M3 4 H21 L14 12.5 V20.5 L10 18.5 V12.5 Z" stroke="#344054" stroke-width="2" stroke-linejoin="round"/></svg><div class="t" style="left:1362px;top:455.3px;font-size:28px;line-height:28px;color:#344054;font-weight:400;letter-spacing:1.0px;-webkit-text-stroke:0.35px #344054;">Advanced Filters</div><div class="b" style="left:1637px;top:437px;width:183px;height:61px;background:#fff;border:2px solid #e4e7ec;border-radius:31px;background:#edf3fe;border-color:#97b6f6"></div><svg class="b" style="left:1662px;top:455px;" width="28" height="28" viewBox="0 0 24 24" fill="none"><path d="M7 9 L12 4 L17 9 M7 15 L12 20 L17 15" stroke="#2857e0" stroke-width="2.4" stroke-linecap="round" stroke-linejoin="round"/></svg><div class="t" style="left:1699px;top:455.3px;font-size:28px;line-height:28px;color:#2857e0;font-weight:400;letter-spacing:0.03px;-webkit-text-stroke:0.35px #2857e0;">Sort (1)</div><div class="b" style="left:2086px;top:433px;width:445px;height:70px;background:#fff;border:2px solid #e4e7ec;border-radius:14px"></div><svg class="b" style="left:2112px;top:450px;" width="38" height="38" viewBox="0 0 24 24" fill="none"><circle cx="10.5" cy="10.5" r="7" stroke="#667085" stroke-width="1.9"/><path d="M15.8 15.8 L21 21" stroke="#667085" stroke-width="1.9" stroke-linecap="round"/></svg><div class="t" style="left:2176px;top:455.3px;font-size:28px;line-height:28px;color:#737b88;font-weight:400;letter-spacing:0.92px;">Search for task title</div><svg class="b" style="left:2557px;top:456px;" width="30" height="30" viewBox="0 0 24 24" fill="none"><path d="M12 1.5 L14.2 1.9 L14.9 4.7 L16.9 5.8 L19.6 4.9 L21.1 6.6 L19.9 9.2 L20.5 11.5 L22.5 12 L22.1 14.2 L19.4 15 L18.3 17 L19.2 19.7 L17.5 21.2 L14.9 20 L12.6 20.6 L12 22.5 L9.8 22.1 L9.1 19.3 L7.1 18.2 L4.4 19.1 L2.9 17.4 L4.1 14.8 L3.5 12.5 L1.5 12 L1.9 9.8 L4.6 9 L5.7 7 L4.8 4.3 L6.5 2.8 L9.1 4 L11.4 3.4 Z" stroke="#344054" stroke-width="2" stroke-linecap="round" stroke-linejoin="round"/><circle cx="12" cy="12" r="3.5" stroke="#344054" stroke-width="2" stroke-linecap="round" stroke-linejoin="round"/></svg><div class="t" style="left:2597px;top:455.3px;font-size:28px;line-height:28px;color:#344054;font-weight:400;letter-spacing:0.91px;-webkit-text-stroke:0.8px #344054;">Manage Fields</div><div class="b" style="left:471px;top:526px;width:2346px;height:1591px;background:#fff;border:2px solid #edeef2;border-radius:10px;box-shadow:0 1px 3px rgba(16,24,40,.06)"></div><div class="b" style="left:0;top:611px;width:2878px;height:1419px;overflow:hidden"><div class="b" style="left:0;top:-611px;width:2878px;height:2146px"><div class="b" style="left:471px;top:652px;width:2346px;height:2px;background:#edeef2"></div><div class="b" style="left:497px;top:593px;width:32px;height:32px;background:#fff;border:2px solid #d0d5dd;border-radius:8px"></div><svg class="b" style="left:596px;top:588px;" width="44" height="44" viewBox="0 0 44 44" fill="none"><circle cx="22" cy="22" r="20.1" stroke="#98a2b3" stroke-width="3.6"/><path d="M13.4 21.8 L18.9 27.4 L30.8 15.8" stroke="#98a2b3" stroke-width="3.5" stroke-linecap="round" stroke-linejoin="round"/></svg><div class="t" style="left:717px;top:593.5px;font-size:29px;line-height:29px;color:#101828;font-weight:400;letter-spacing:0.25px;">Follow with Jarrett Crist</div><div class="t" style="left:1217px;top:593.5px;font-size:29px;line-height:29px;color:#101828;font-weight:400;letter-spacing:0.65px;">follow up</div><div class="b" style="left:1599px;top:581px;width:58px;height:58px;background:#f6d1d8;border-radius:50%;color:#475467;font-size:23px;line-height:58px;text-align:center">JC</div><div class="b" style="left:2139px;top:586px;width:50px;height:50px;background:#f3deb6;border-radius:50%;color:#475467;font-size:24px;line-height:55px;text-align:center">AK</div><div class="t" style="left:2330px;top:597.3px;font-size:28px;line-height:28px;color:#c43a2b;font-weight:400;letter-spacing:0px;">Dec 4, 2024 12:00 AM</div><svg class="b" style="left:2673px;top:592px;" width="36" height="36" viewBox="0 0 24 24" fill="none"><path d="M4 20.5 L4.8 16 L16.5 4.3 A2.2 2.2 0 0 1 19.7 7.5 L8 19.2 Z M14.5 6.3 L17.7 9.5" stroke="#667085" stroke-width="1.7" stroke-linejoin="round"/></svg><svg class="b" style="left:2740px;top:592px;" width="30" height="34" viewBox="0 0 30 34" fill="none"><path d="M2.2 9.8 H27.8 M9.5 9.8 V7 A3.3 3.3 0 0 1 12.8 3.7 H17.2 A3.3 3.3 0 0 1 20.5 7 V9.8 M4.7 9.8 V27.5 A4.3 4.3 0 0 0 9 31.8 H21 A4.3 4.3 0 0 0 25.3 27.5 V9.8 M12.3 16.3 V24.6 M17.7 16.3 V24.6" stroke="#667085" stroke-width="2.1" stroke-linecap="round" stroke-linejoin="round"/></svg><div class="b" style="left:471px;top:738px;width:2346px;height:2px;background:#edeef2"></div><div class="b" style="left:497px;top:679px;width:32px;height:32px;background:#fff;border:2px solid #d0d5dd;border-radius:8px"></div><svg class="b" style="left:596px;top:674px;" width="44" height="44" viewBox="0 0 44 44" fill="none"><circle cx="22" cy="22" r="22" fill="#419a5b"/><path d="M14 22.5 L19.5 28 L30 17" stroke="#fff" stroke-width="3.6" stroke-linecap="round" stroke-linejoin="round"/></svg><div class="t" style="left:717px;top:679.5px;font-size:29px;line-height:29px;color:#101828;font-weight:400;letter-spacing:0.25px;">Follow with</div><div class="t" style="left:1217px;top:679.5px;font-size:29px;line-height:29px;color:#101828;font-weight:400;letter-spacing:0.65px;">follow up</div><div class="b" style="left:1599px;top:667px;width:58px;height:58px;background:#fbf0a0;border-radius:50%;color:#475467;font-size:23px;line-height:58px;text-align:center">2-</div><div class="b" style="left:2139px;top:672px;width:50px;height:50px;background:#f3deb6;border-radius:50%;color:#475467;font-size:24px;line-height:55px;text-align:center">AK</div><div class="t" style="left:2330px;top:683.3px;font-size:28px;line-height:28px;color:#101828;font-weight:400;letter-spacing:0px;">Dec 4, 2024 12:00 AM</div><svg class="b" style="left:2673px;top:678px;" width="36" height="36" viewBox="0 0 24 24" fill="none"><path d="M4 20.5 L4.8 16 L16.5 4.3 A2.2 2.2 0 0 1 19.7 7.5 L8 19.2 Z M14.5 6.3 L17.7 9.5" stroke="#667085" stroke-width="1.7" stroke-linejoin="round"/></svg><svg class="b" style="left:2740px;top:678px;" width="30" height="34" viewBox="0 0 30 34" fill="none"><path d="M2.2 9.8 H27.8 M9.5 9.8 V7 A3.3 3.3 0 0 1 12.8 3.7 H17.2 A3.3 3.3 0 0 1 20.5 7 V9.8 M4.7 9.8 V27.5 A4.3 4.3 0 0 0 9 31.8 H21 A4.3 4.3 0 0 0 25.3 27.5 V9.8 M12.3 16.3 V24.6 M17.7 16.3 V24.6" stroke="#667085" stroke-width="2.1" stroke-linecap="round" stroke-linejoin="round"/></svg><div class="b" style="left:471px;top:824px;width:2346px;height:2px;background:#edeef2"></div><div class="b" style="left:497px;top:765px;width:32px;height:32px;background:#fff;border:2px solid #d0d5dd;border-radius:8px"></div><svg class="b" style="left:596px;top:760px;" width="44" height="44" viewBox="0 0 44 44" fill="none"><circle cx="22" cy="22" r="20.1" stroke="#98a2b3" stroke-width="3.6"/><path d="M13.4 21.8 L18.9 27.4 L30.8 15.8" stroke="#98a2b3" stroke-width="3.5" stroke-linecap="round" stroke-linejoin="round"/></svg><div class="t" style="left:717px;top:765.5px;font-size:29px;line-height:29px;color:#101828;font-weight:400;letter-spacing:0.25px;">Follow with Mercedes Satterfield</div><div class="t" style="left:1217px;top:765.5px;font-size:29px;line-height:29px;color:#101828;font-weight:400;letter-spacing:0.65px;">follow up</div><div class="b" style="left:1599px;top:753px;width:58px;height:58px;background:#b0f2df;border-radius:50%;color:#475467;font-size:23px;line-height:58px;text-align:center">MS</div><div class="b" style="left:2139px;top:758px;width:50px;height:50px;background:#f3deb6;border-radius:50%;color:#475467;font-size:24px;line-height:55px;text-align:center">AK</div><div class="t" style="left:2330px;top:769.3px;font-size:28px;line-height:28px;color:#c43a2b;font-weight:400;letter-spacing:0px;">Nov 28, 2024 12:00 AM</div><svg class="b" style="left:2673px;top:764px;" width="36" height="36" viewBox="0 0 24 24" fill="none"><path d="M4 20.5 L4.8 16 L16.5 4.3 A2.2 2.2 0 0 1 19.7 7.5 L8 19.2 Z M14.5 6.3 L17.7 9.5" stroke="#667085" stroke-width="1.7" stroke-linejoin="round"/></svg><svg class="b" style="left:2740px;top:764px;" width="30" height="34" viewBox="0 0 30 34" fill="none"><path d="M2.2 9.8 H27.8 M9.5 9.8 V7 A3.3 3.3 0 0 1 12.8 3.7 H17.2 A3.3 3.3 0 0 1 20.5 7 V9.8 M4.7 9.8 V27.5 A4.3 4.3 0 0 0 9 31.8 H21 A4.3 4.3 0 0 0 25.3 27.5 V9.8 M12.3 16.3 V24.6 M17.7 16.3 V24.6" stroke="#667085" stroke-width="2.1" stroke-linecap="round" stroke-linejoin="round"/></svg><div class="b" style="left:471px;top:910px;width:2346px;height:2px;background:#edeef2"></div><div class="b" style="left:497px;top:851px;width:32px;height:32px;background:#fff;border:2px solid #d0d5dd;border-radius:8px"></div><svg class="b" style="left:596px;top:846px;" width="44" height="44" viewBox="0 0 44 44" fill="none"><circle cx="22" cy="22" r="20.1" stroke="#98a2b3" stroke-width="3.6"/><path d="M13.4 21.8 L18.9 27.4 L30.8 15.8" stroke="#98a2b3" stroke-width="3.5" stroke-linecap="round" stroke-linejoin="round"/></svg><div class="t" style="left:717px;top:851.5px;font-size:29px;line-height:29px;color:#101828;font-weight:400;letter-spacing:0.25px;">Follow with Corrine Borer</div><div class="t" style="left:1217px;top:851.5px;font-size:29px;line-height:29px;color:#101828;font-weight:400;letter-spacing:0.65px;">follow up</div><div class="b" style="left:1599px;top:839px;width:58px;height:58px;background:#dcd8fb;border-radius:50%;color:#475467;font-size:23px;line-height:58px;text-align:center">CB</div><div class="b" style="left:2139px;top:844px;width:50px;height:50px;background:#f3deb6;border-radius:50%;color:#475467;font-size:24px;line-height:55px;text-align:center">AK</div><div class="t" style="left:2330px;top:855.3px;font-size:28px;line-height:28px;color:#c43a2b;font-weight:400;letter-spacing:0px;">Nov 28, 2024 12:00 AM</div><svg class="b" style="left:2673px;top:850px;" width="36" height="36" viewBox="0 0 24 24" fill="none"><path d="M4 20.5 L4.8 16 L16.5 4.3 A2.2 2.2 0 0 1 19.7 7.5 L8 19.2 Z M14.5 6.3 L17.7 9.5" stroke="#667085" stroke-width="1.7" stroke-linejoin="round"/></svg><svg class="b" style="left:2740px;top:850px;" width="30" height="34" viewBox="0 0 30 34" fill="none"><path d="M2.2 9.8 H27.8 M9.5 9.8 V7 A3.3 3.3 0 0 1 12.8 3.7 H17.2 A3.3 3.3 0 0 1 20.5 7 V9.8 M4.7 9.8 V27.5 A4.3 4.3 0 0 0 9 31.8 H21 A4.3 4.3 0 0 0 25.3 27.5 V9.8 M12.3 16.3 V24.6 M17.7 16.3 V24.6" stroke="#667085" stroke-width="2.1" stroke-linecap="round" stroke-linejoin="round"/></svg><div class="b" style="left:471px;top:996px;width:2346px;height:2px;background:#edeef2"></div><div class="b" style="left:497px;top:937px;width:32px;height:32px;background:#fff;border:2px solid #d0d5dd;border-radius:8px"></div><svg class="b" style="left:596px;top:932px;" width="44" height="44" viewBox="0 0 44 44" fill="none"><circle cx="22" cy="22" r="20.1" stroke="#98a2b3" stroke-width="3.6"/><path d="M13.4 21.8 L18.9 27.4 L30.8 15.8" stroke="#98a2b3" stroke-width="3.5" stroke-linecap="round" stroke-linejoin="round"/></svg><div class="t" style="left:717px;top:937.5px;font-size:29px;line-height:29px;color:#101828;font-weight:400;letter-spacing:0.25px;">Follow with Judy Hoeger</div><div class="t" style="left:1217px;top:937.5px;font-size:29px;line-height:29px;color:#101828;font-weight:400;letter-spacing:0.65px;">follow up</div><div class="b" style="left:1599px;top:925px;width:58px;height:58px;background:#b8f0de;border-radius:50%;color:#475467;font-size:23px;line-height:58px;text-align:center">JH</div><div class="b" style="left:2139px;top:930px;width:50px;height:50px;background:#f3deb6;border-radius:50%;color:#475467;font-size:24px;line-height:55px;text-align:center">AK</div><div class="t" style="left:2330px;top:941.3px;font-size:28px;line-height:28px;color:#c43a2b;font-weight:400;letter-spacing:0px;">Nov 28, 2024 12:00 AM</div><svg class="b" style="left:2673px;top:936px;" width="36" height="36" viewBox="0 0 24 24" fill="none"><path d="M4 20.5 L4.8 16 L16.5 4.3 A2.2 2.2 0 0 1 19.7 7.5 L8 19.2 Z M14.5 6.3 L17.7 9.5" stroke="#667085" stroke-width="1.7" stroke-linejoin="round"/></svg><svg class="b" style="left:2740px;top:936px;" width="30" height="34" viewBox="0 0 30 34" fill="none"><path d="M2.2 9.8 H27.8 M9.5 9.8 V7 A3.3 3.3 0 0 1 12.8 3.7 H17.2 A3.3 3.3 0 0 1 20.5 7 V9.8 M4.7 9.8 V27.5 A4.3 4.3 0 0 0 9 31.8 H21 A4.3 4.3 0 0 0 25.3 27.5 V9.8 M12.3 16.3 V24.6 M17.7 16.3 V24.6" stroke="#667085" stroke-width="2.1" stroke-linecap="round" stroke-linejoin="round"/></svg><div class="b" style="left:471px;top:1082px;width:2346px;height:2px;background:#edeef2"></div><div class="b" style="left:497px;top:1023px;width:32px;height:32px;background:#fff;border:2px solid #d0d5dd;border-radius:8px"></div><svg class="b" style="left:596px;top:1018px;" width="44" height="44" viewBox="0 0 44 44" fill="none"><circle cx="22" cy="22" r="20.1" stroke="#98a2b3" stroke-width="3.6"/><path d="M13.4 21.8 L18.9 27.4 L30.8 15.8" stroke="#98a2b3" stroke-width="3.5" stroke-linecap="round" stroke-linejoin="round"/></svg><div class="t" style="left:717px;top:1023.5px;font-size:29px;line-height:29px;color:#101828;font-weight:400;letter-spacing:0.25px;">Follow with Reilly Hackett</div><div class="t" style="left:1217px;top:1023.5px;font-size:29px;line-height:29px;color:#101828;font-weight:400;letter-spacing:0.65px;">follow up</div><div class="b" style="left:1599px;top:1011px;width:58px;height:58px;background:#d9f9b5;border-radius:50%;color:#475467;font-size:23px;line-height:58px;text-align:center">RH</div><div class="b" style="left:2139px;top:1016px;width:50px;height:50px;background:#f3deb6;border-radius:50%;color:#475467;font-size:24px;line-height:55px;text-align:center">AK</div><div class="t" style="left:2330px;top:1027.3px;font-size:28px;line-height:28px;color:#c43a2b;font-weight:400;letter-spacing:0px;">Nov 28, 2024 12:00 AM</div><svg class="b" style="left:2673px;top:1022px;" width="36" height="36" viewBox="0 0 24 24" fill="none"><path d="M4 20.5 L4.8 16 L16.5 4.3 A2.2 2.2 0 0 1 19.7 7.5 L8 19.2 Z M14.5 6.3 L17.7 9.5" stroke="#667085" stroke-width="1.7" stroke-linejoin="round"/></svg><svg class="b" style="left:2740px;top:1022px;" width="30" height="34" viewBox="0 0 30 34" fill="none"><path d="M2.2 9.8 H27.8 M9.5 9.8 V7 A3.3 3.3 0 0 1 12.8 3.7 H17.2 A3.3 3.3 0 0 1 20.5 7 V9.8 M4.7 9.8 V27.5 A4.3 4.3 0 0 0 9 31.8 H21 A4.3 4.3 0 0 0 25.3 27.5 V9.8 M12.3 16.3 V24.6 M17.7 16.3 V24.6" stroke="#667085" stroke-width="2.1" stroke-linecap="round" stroke-linejoin="round"/></svg><div class="b" style="left:471px;top:1168px;width:2346px;height:2px;background:#edeef2"></div><div class="b" style="left:497px;top:1109px;width:32px;height:32px;background:#fff;border:2px solid #d0d5dd;border-radius:8px"></div><svg class="b" style="left:596px;top:1104px;" width="44" height="44" viewBox="0 0 44 44" fill="none"><circle cx="22" cy="22" r="20.1" stroke="#98a2b3" stroke-width="3.6"/><path d="M13.4 21.8 L18.9 27.4 L30.8 15.8" stroke="#98a2b3" stroke-width="3.5" stroke-linecap="round" stroke-linejoin="round"/></svg><div class="t" style="left:717px;top:1109.5px;font-size:29px;line-height:29px;color:#101828;font-weight:400;letter-spacing:0.25px;">Follow with Jalen Bashirian</div><div class="t" style="left:1217px;top:1109.5px;font-size:29px;line-height:29px;color:#101828;font-weight:400;letter-spacing:0.65px;">follow up</div><div class="b" style="left:1599px;top:1097px;width:58px;height:58px;background:#d7f5a8;border-radius:50%;color:#475467;font-size:23px;line-height:58px;text-align:center">JB</div><div class="b" style="left:2139px;top:1102px;width:50px;height:50px;background:#f3deb6;border-radius:50%;color:#475467;font-size:24px;line-height:55px;text-align:center">AK</div><div class="t" style="left:2330px;top:1113.3px;font-size:28px;line-height:28px;color:#c43a2b;font-weight:400;letter-spacing:0px;">Nov 28, 2024 12:00 AM</div><svg class="b" style="left:2673px;top:1108px;" width="36" height="36" viewBox="0 0 24 24" fill="none"><path d="M4 20.5 L4.8 16 L16.5 4.3 A2.2 2.2 0 0 1 19.7 7.5 L8 19.2 Z M14.5 6.3 L17.7 9.5" stroke="#667085" stroke-width="1.7" stroke-linejoin="round"/></svg><svg class="b" style="left:2740px;top:1108px;" width="30" height="34" viewBox="0 0 30 34" fill="none"><path d="M2.2 9.8 H27.8 M9.5 9.8 V7 A3.3 3.3 0 0 1 12.8 3.7 H17.2 A3.3 3.3 0 0 1 20.5 7 V9.8 M4.7 9.8 V27.5 A4.3 4.3 0 0 0 9 31.8 H21 A4.3 4.3 0 0 0 25.3 27.5 V9.8 M12.3 16.3 V24.6 M17.7 16.3 V24.6" stroke="#667085" stroke-width="2.1" stroke-linecap="round" stroke-linejoin="round"/></svg><div class="b" style="left:471px;top:1254px;width:2346px;height:2px;background:#edeef2"></div><div class="b" style="left:497px;top:1195px;width:32px;height:32px;background:#fff;border:2px solid #d0d5dd;border-radius:8px"></div><svg class="b" style="left:596px;top:1190px;" width="44" height="44" viewBox="0 0 44 44" fill="none"><circle cx="22" cy="22" r="20.1" stroke="#98a2b3" stroke-width="3.6"/><path d="M13.4 21.8 L18.9 27.4 L30.8 15.8" stroke="#98a2b3" stroke-width="3.5" stroke-linecap="round" stroke-linejoin="round"/></svg><div class="t" style="left:717px;top:1195.5px;font-size:29px;line-height:29px;color:#101828;font-weight:400;letter-spacing:0.25px;">Follow with Rudolph Roob</div><div class="t" style="left:1217px;top:1195.5px;font-size:29px;line-height:29px;color:#101828;font-weight:400;letter-spacing:0.65px;">follow up</div><div class="b" style="left:1599px;top:1183px;width:58px;height:58px;background:#d9f5a8;border-radius:50%;color:#475467;font-size:23px;line-height:58px;text-align:center">RR</div><div class="b" style="left:2139px;top:1188px;width:50px;height:50px;background:#f3deb6;border-radius:50%;color:#475467;font-size:24px;line-height:55px;text-align:center">AK</div><div class="t" style="left:2330px;top:1199.3px;font-size:28px;line-height:28px;color:#c43a2b;font-weight:400;letter-spacing:0px;">Nov 28, 2024 12:00 AM</div><svg class="b" style="left:2673px;top:1194px;" width="36" height="36" viewBox="0 0 24 24" fill="none"><path d="M4 20.5 L4.8 16 L16.5 4.3 A2.2 2.2 0 0 1 19.7 7.5 L8 19.2 Z M14.5 6.3 L17.7 9.5" stroke="#667085" stroke-width="1.7" stroke-linejoin="round"/></svg><svg class="b" style="left:2740px;top:1194px;" width="30" height="34" viewBox="0 0 30 34" fill="none"><path d="M2.2 9.8 H27.8 M9.5 9.8 V7 A3.3 3.3 0 0 1 12.8 3.7 H17.2 A3.3 3.3 0 0 1 20.5 7 V9.8 M4.7 9.8 V27.5 A4.3 4.3 0 0 0 9 31.8 H21 A4.3 4.3 0 0 0 25.3 27.5 V9.8 M12.3 16.3 V24.6 M17.7 16.3 V24.6" stroke="#667085" stroke-width="2.1" stroke-linecap="round" stroke-linejoin="round"/></svg><div class="b" style="left:471px;top:1340px;width:2346px;height:2px;background:#edeef2"></div><div class="b" style="left:497px;top:1281px;width:32px;height:32px;background:#fff;border:2px solid #d0d5dd;border-radius:8px"></div><svg class="b" style="left:596px;top:1276px;" width="44" height="44" viewBox="0 0 44 44" fill="none"><circle cx="22" cy="22" r="20.1" stroke="#98a2b3" stroke-width="3.6"/><path d="M13.4 21.8 L18.9 27.4 L30.8 15.8" stroke="#98a2b3" stroke-width="3.5" stroke-linecap="round" stroke-linejoin="round"/></svg><div class="t" style="left:717px;top:1281.5px;font-size:29px;line-height:29px;color:#101828;font-weight:400;letter-spacing:0.25px;">Follow with Rowland Macgyver</div><div class="t" style="left:1217px;top:1281.5px;font-size:29px;line-height:29px;color:#101828;font-weight:400;letter-spacing:0.65px;">follow up</div><div class="b" style="left:1599px;top:1269px;width:58px;height:58px;background:#f6d0d6;border-radius:50%;color:#475467;font-size:23px;line-height:58px;text-align:center">RM</div><div class="b" style="left:2139px;top:1274px;width:50px;height:50px;background:#f3deb6;border-radius:50%;color:#475467;font-size:24px;line-height:55px;text-align:center">AK</div><div class="t" style="left:2330px;top:1285.3px;font-size:28px;line-height:28px;color:#c43a2b;font-weight:400;letter-spacing:0px;">Nov 28, 2024 12:00 AM</div><svg class="b" style="left:2673px;top:1280px;" width="36" height="36" viewBox="0 0 24 24" fill="none"><path d="M4 20.5 L4.8 16 L16.5 4.3 A2.2 2.2 0 0 1 19.7 7.5 L8 19.2 Z M14.5 6.3 L17.7 9.5" stroke="#667085" stroke-width="1.7" stroke-linejoin="round"/></svg><svg class="b" style="left:2740px;top:1280px;" width="30" height="34" viewBox="0 0 30 34" fill="none"><path d="M2.2 9.8 H27.8 M9.5 9.8 V7 A3.3 3.3 0 0 1 12.8 3.7 H17.2 A3.3 3.3 0 0 1 20.5 7 V9.8 M4.7 9.8 V27.5 A4.3 4.3 0 0 0 9 31.8 H21 A4.3 4.3 0 0 0 25.3 27.5 V9.8 M12.3 16.3 V24.6 M17.7 16.3 V24.6" stroke="#667085" stroke-width="2.1" stroke-linecap="round" stroke-linejoin="round"/></svg><div class="b" style="left:471px;top:1426px;width:2346px;height:2px;background:#edeef2"></div><div class="b" style="left:497px;top:1367px;width:32px;height:32px;background:#fff;border:2px solid #d0d5dd;border-radius:8px"></div><svg class="b" style="left:596px;top:1362px;" width="44" height="44" viewBox="0 0 44 44" fill="none"><circle cx="22" cy="22" r="20.1" stroke="#98a2b3" stroke-width="3.6"/><path d="M13.4 21.8 L18.9 27.4 L30.8 15.8" stroke="#98a2b3" stroke-width="3.5" stroke-linecap="round" stroke-linejoin="round"/></svg><div class="t" style="left:717px;top:1367.5px;font-size:29px;line-height:29px;color:#101828;font-weight:400;letter-spacing:0.25px;">Follow with Daisha Sauer</div><div class="t" style="left:1217px;top:1367.5px;font-size:29px;line-height:29px;color:#101828;font-weight:400;letter-spacing:0.65px;">follow up</div><div class="b" style="left:1599px;top:1355px;width:58px;height:58px;background:#c4ecf8;border-radius:50%;color:#475467;font-size:23px;line-height:58px;text-align:center">DS</div><div class="b" style="left:2139px;top:1360px;width:50px;height:50px;background:#f3deb6;border-radius:50%;color:#475467;font-size:24px;line-height:55px;text-align:center">AK</div><div class="t" style="left:2330px;top:1371.3px;font-size:28px;line-height:28px;color:#c43a2b;font-weight:400;letter-spacing:0px;">Nov 28, 2024 12:00 AM</div><svg class="b" style="left:2673px;top:1366px;" width="36" height="36" viewBox="0 0 24 24" fill="none"><path d="M4 20.5 L4.8 16 L16.5 4.3 A2.2 2.2 0 0 1 19.7 7.5 L8 19.2 Z M14.5 6.3 L17.7 9.5" stroke="#667085" stroke-width="1.7" stroke-linejoin="round"/></svg><svg class="b" style="left:2740px;top:1366px;" width="30" height="34" viewBox="0 0 30 34" fill="none"><path d="M2.2 9.8 H27.8 M9.5 9.8 V7 A3.3 3.3 0 0 1 12.8 3.7 H17.2 A3.3 3.3 0 0 1 20.5 7 V9.8 M4.7 9.8 V27.5 A4.3 4.3 0 0 0 9 31.8 H21 A4.3 4.3 0 0 0 25.3 27.5 V9.8 M12.3 16.3 V24.6 M17.7 16.3 V24.6" stroke="#667085" stroke-width="2.1" stroke-linecap="round" stroke-linejoin="round"/></svg><div class="b" style="left:471px;top:1512px;width:2346px;height:2px;background:#edeef2"></div><div class="b" style="left:497px;top:1453px;width:32px;height:32px;background:#fff;border:2px solid #d0d5dd;border-radius:8px"></div><svg class="b" style="left:596px;top:1448px;" width="44" height="44" viewBox="0 0 44 44" fill="none"><circle cx="22" cy="22" r="20.1" stroke="#98a2b3" stroke-width="3.6"/><path d="M13.4 21.8 L18.9 27.4 L30.8 15.8" stroke="#98a2b3" stroke-width="3.5" stroke-linecap="round" stroke-linejoin="round"/></svg><div class="t" style="left:717px;top:1453.5px;font-size:29px;line-height:29px;color:#101828;font-weight:400;letter-spacing:0.25px;">Follow with Rebeca Stroman</div><div class="t" style="left:1217px;top:1453.5px;font-size:29px;line-height:29px;color:#101828;font-weight:400;letter-spacing:0.65px;">follow up</div><div class="b" style="left:1599px;top:1441px;width:58px;height:58px;background:#dcd8fb;border-radius:50%;color:#475467;font-size:23px;line-height:58px;text-align:center">RS</div><div class="b" style="left:2139px;top:1446px;width:50px;height:50px;background:#f3deb6;border-radius:50%;color:#475467;font-size:24px;line-height:55px;text-align:center">AK</div><div class="t" style="left:2330px;top:1457.3px;font-size:28px;line-height:28px;color:#c43a2b;font-weight:400;letter-spacing:0px;">Nov 28, 2024 12:00 AM</div><svg class="b" style="left:2673px;top:1452px;" width="36" height="36" viewBox="0 0 24 24" fill="none"><path d="M4 20.5 L4.8 16 L16.5 4.3 A2.2 2.2 0 0 1 19.7 7.5 L8 19.2 Z M14.5 6.3 L17.7 9.5" stroke="#667085" stroke-width="1.7" stroke-linejoin="round"/></svg><svg class="b" style="left:2740px;top:1452px;" width="30" height="34" viewBox="0 0 30 34" fill="none"><path d="M2.2 9.8 H27.8 M9.5 9.8 V7 A3.3 3.3 0 0 1 12.8 3.7 H17.2 A3.3 3.3 0 0 1 20.5 7 V9.8 M4.7 9.8 V27.5 A4.3 4.3 0 0 0 9 31.8 H21 A4.3 4.3 0 0 0 25.3 27.5 V9.8 M12.3 16.3 V24.6 M17.7 16.3 V24.6" stroke="#667085" stroke-width="2.1" stroke-linecap="round" stroke-linejoin="round"/></svg><div class="b" style="left:471px;top:1598px;width:2346px;height:2px;background:#edeef2"></div><div class="b" style="left:497px;top:1539px;width:32px;height:32px;background:#fff;border:2px solid #d0d5dd;border-radius:8px"></div><svg class="b" style="left:596px;top:1534px;" width="44" height="44" viewBox="0 0 44 44" fill="none"><circle cx="22" cy="22" r="20.1" stroke="#98a2b3" stroke-width="3.6"/><path d="M13.4 21.8 L18.9 27.4 L30.8 15.8" stroke="#98a2b3" stroke-width="3.5" stroke-linecap="round" stroke-linejoin="round"/></svg><div class="t" style="left:717px;top:1539.5px;font-size:29px;line-height:29px;color:#101828;font-weight:400;letter-spacing:0.25px;">Follow with Ford Doyle</div><div class="t" style="left:1217px;top:1539.5px;font-size:29px;line-height:29px;color:#101828;font-weight:400;letter-spacing:0.65px;">follow up</div><div class="b" style="left:1599px;top:1527px;width:58px;height:58px;background:#dcd6fb;border-radius:50%;color:#475467;font-size:23px;line-height:58px;text-align:center">FD</div><div class="b" style="left:2139px;top:1532px;width:50px;height:50px;background:#f3deb6;border-radius:50%;color:#475467;font-size:24px;line-height:55px;text-align:center">AK</div><div class="t" style="left:2330px;top:1543.3px;font-size:28px;line-height:28px;color:#c43a2b;font-weight:400;letter-spacing:0px;">Nov 28, 2024 12:00 AM</div><svg class="b" style="left:2673px;top:1538px;" width="36" height="36" viewBox="0 0 24 24" fill="none"><path d="M4 20.5 L4.8 16 L16.5 4.3 A2.2 2.2 0 0 1 19.7 7.5 L8 19.2 Z M14.5 6.3 L17.7 9.5" stroke="#667085" stroke-width="1.7" stroke-linejoin="round"/></svg><svg class="b" style="left:2740px;top:1538px;" width="30" height="34" viewBox="0 0 30 34" fill="none"><path d="M2.2 9.8 H27.8 M9.5 9.8 V7 A3.3 3.3 0 0 1 12.8 3.7 H17.2 A3.3 3.3 0 0 1 20.5 7 V9.8 M4.7 9.8 V27.5 A4.3 4.3 0 0 0 9 31.8 H21 A4.3 4.3 0 0 0 25.3 27.5 V9.8 M12.3 16.3 V24.6 M17.7 16.3 V24.6" stroke="#667085" stroke-width="2.1" stroke-linecap="round" stroke-linejoin="round"/></svg><div class="b" style="left:471px;top:1684px;width:2346px;height:2px;background:#edeef2"></div><div class="b" style="left:497px;top:1625px;width:32px;height:32px;background:#fff;border:2px solid #d0d5dd;border-radius:8px"></div><svg class="b" style="left:596px;top:1620px;" width="44" height="44" viewBox="0 0 44 44" fill="none"><circle cx="22" cy="22" r="20.1" stroke="#98a2b3" stroke-width="3.6"/><path d="M13.4 21.8 L18.9 27.4 L30.8 15.8" stroke="#98a2b3" stroke-width="3.5" stroke-linecap="round" stroke-linejoin="round"/></svg><div class="t" style="left:717px;top:1625.5px;font-size:29px;line-height:29px;color:#101828;font-weight:400;letter-spacing:0.25px;">Follow with Wilma Morar</div><div class="t" style="left:1217px;top:1625.5px;font-size:29px;line-height:29px;color:#101828;font-weight:400;letter-spacing:0.65px;">follow up</div><div class="b" style="left:1599px;top:1613px;width:58px;height:58px;background:#c6e6f8;border-radius:50%;color:#475467;font-size:23px;line-height:58px;text-align:center">WM</div><div class="b" style="left:2139px;top:1618px;width:50px;height:50px;background:#f3deb6;border-radius:50%;color:#475467;font-size:24px;line-height:55px;text-align:center">AK</div><div class="t" style="left:2330px;top:1629.3px;font-size:28px;line-height:28px;color:#c43a2b;font-weight:400;letter-spacing:0px;">Nov 28, 2024 12:00 AM</div><svg class="b" style="left:2673px;top:1624px;" width="36" height="36" viewBox="0 0 24 24" fill="none"><path d="M4 20.5 L4.8 16 L16.5 4.3 A2.2 2.2 0 0 1 19.7 7.5 L8 19.2 Z M14.5 6.3 L17.7 9.5" stroke="#667085" stroke-width="1.7" stroke-linejoin="round"/></svg><svg class="b" style="left:2740px;top:1624px;" width="30" height="34" viewBox="0 0 30 34" fill="none"><path d="M2.2 9.8 H27.8 M9.5 9.8 V7 A3.3 3.3 0 0 1 12.8 3.7 H17.2 A3.3 3.3 0 0 1 20.5 7 V9.8 M4.7 9.8 V27.5 A4.3 4.3 0 0 0 9 31.8 H21 A4.3 4.3 0 0 0 25.3 27.5 V9.8 M12.3 16.3 V24.6 M17.7 16.3 V24.6" stroke="#667085" stroke-width="2.1" stroke-linecap="round" stroke-linejoin="round"/></svg><div class="b" style="left:471px;top:1770px;width:2346px;height:2px;background:#edeef2"></div><div class="b" style="left:497px;top:1711px;width:32px;height:32px;background:#fff;border:2px solid #d0d5dd;border-radius:8px"></div><svg class="b" style="left:596px;top:1706px;" width="44" height="44" viewBox="0 0 44 44" fill="none"><circle cx="22" cy="22" r="20.1" stroke="#98a2b3" stroke-width="3.6"/><path d="M13.4 21.8 L18.9 27.4 L30.8 15.8" stroke="#98a2b3" stroke-width="3.5" stroke-linecap="round" stroke-linejoin="round"/></svg><div class="t" style="left:717px;top:1711.5px;font-size:29px;line-height:29px;color:#101828;font-weight:400;letter-spacing:0.25px;">Follow with Khalid Lakin</div><div class="t" style="left:1217px;top:1711.5px;font-size:29px;line-height:29px;color:#101828;font-weight:400;letter-spacing:0.65px;">follow up</div><div class="b" style="left:1599px;top:1699px;width:58px;height:58px;background:#fae4f6;border-radius:50%;color:#475467;font-size:23px;line-height:58px;text-align:center">KL</div><div class="b" style="left:2139px;top:1704px;width:50px;height:50px;background:#f3deb6;border-radius:50%;color:#475467;font-size:24px;line-height:55px;text-align:center">AK</div><div class="t" style="left:2330px;top:1715.3px;font-size:28px;line-height:28px;color:#c43a2b;font-weight:400;letter-spacing:0px;">Nov 28, 2024 12:00 AM</div><svg class="b" style="left:2673px;top:1710px;" width="36" height="36" viewBox="0 0 24 24" fill="none"><path d="M4 20.5 L4.8 16 L16.5 4.3 A2.2 2.2 0 0 1 19.7 7.5 L8 19.2 Z M14.5 6.3 L17.7 9.5" stroke="#667085" stroke-width="1.7" stroke-linejoin="round"/></svg><svg class="b" style="left:2740px;top:1710px;" width="30" height="34" viewBox="0 0 30 34" fill="none"><path d="M2.2 9.8 H27.8 M9.5 9.8 V7 A3.3 3.3 0 0 1 12.8 3.7 H17.2 A3.3 3.3 0 0 1 20.5 7 V9.8 M4.7 9.8 V27.5 A4.3 4.3 0 0 0 9 31.8 H21 A4.3 4.3 0 0 0 25.3 27.5 V9.8 M12.3 16.3 V24.6 M17.7 16.3 V24.6" stroke="#667085" stroke-width="2.1" stroke-linecap="round" stroke-linejoin="round"/></svg><div class="b" style="left:471px;top:1856px;width:2346px;height:2px;background:#edeef2"></div><div class="b" style="left:497px;top:1797px;width:32px;height:32px;background:#fff;border:2px solid #d0d5dd;border-radius:8px"></div><svg class="b" style="left:596px;top:1792px;" width="44" height="44" viewBox="0 0 44 44" fill="none"><circle cx="22" cy="22" r="20.1" stroke="#98a2b3" stroke-width="3.6"/><path d="M13.4 21.8 L18.9 27.4 L30.8 15.8" stroke="#98a2b3" stroke-width="3.5" stroke-linecap="round" stroke-linejoin="round"/></svg><div class="t" style="left:717px;top:1797.5px;font-size:29px;line-height:29px;color:#101828;font-weight:400;letter-spacing:0.25px;">Follow with Hollie Effertz</div><div class="t" style="left:1217px;top:1797.5px;font-size:29px;line-height:29px;color:#101828;font-weight:400;letter-spacing:0.65px;">follow up</div><div class="b" style="left:1599px;top:1785px;width:58px;height:58px;background:#f6d4d8;border-radius:50%;color:#475467;font-size:23px;line-height:58px;text-align:center">HE</div><div class="b" style="left:2139px;top:1790px;width:50px;height:50px;background:#f3deb6;border-radius:50%;color:#475467;font-size:24px;line-height:55px;text-align:center">AK</div><div class="t" style="left:2330px;top:1801.3px;font-size:28px;line-height:28px;color:#c43a2b;font-weight:400;letter-spacing:0px;">Nov 28, 2024 12:00 AM</div><svg class="b" style="left:2673px;top:1796px;" width="36" height="36" viewBox="0 0 24 24" fill="none"><path d="M4 20.5 L4.8 16 L16.5 4.3 A2.2 2.2 0 0 1 19.7 7.5 L8 19.2 Z M14.5 6.3 L17.7 9.5" stroke="#667085" stroke-width="1.7" stroke-linejoin="round"/></svg><svg class="b" style="left:2740px;top:1796px;" width="30" height="34" viewBox="0 0 30 34" fill="none"><path d="M2.2 9.8 H27.8 M9.5 9.8 V7 A3.3 3.3 0 0 1 12.8 3.7 H17.2 A3.3 3.3 0 0 1 20.5 7 V9.8 M4.7 9.8 V27.5 A4.3 4.3 0 0 0 9 31.8 H21 A4.3 4.3 0 0 0 25.3 27.5 V9.8 M12.3 16.3 V24.6 M17.7 16.3 V24.6" stroke="#667085" stroke-width="2.1" stroke-linecap="round" stroke-linejoin="round"/></svg><div class="b" style="left:471px;top:1942px;width:2346px;height:2px;background:#edeef2"></div><div class="b" style="left:497px;top:1883px;width:32px;height:32px;background:#fff;border:2px solid #d0d5dd;border-radius:8px"></div><svg class="b" style="left:596px;top:1878px;" width="44" height="44" viewBox="0 0 44 44" fill="none"><circle cx="22" cy="22" r="20.1" stroke="#98a2b3" stroke-width="3.6"/><path d="M13.4 21.8 L18.9 27.4 L30.8 15.8" stroke="#98a2b3" stroke-width="3.5" stroke-linecap="round" stroke-linejoin="round"/></svg><div class="t" style="left:717px;top:1883.5px;font-size:29px;line-height:29px;color:#101828;font-weight:400;letter-spacing:0.25px;">Follow with Edgar Fritsch</div><div class="t" style="left:1217px;top:1883.5px;font-size:29px;line-height:29px;color:#101828;font-weight:400;letter-spacing:0.65px;">follow up</div><div class="b" style="left:1599px;top:1871px;width:58px;height:58px;background:#f5e4f5;border-radius:50%;color:#475467;font-size:23px;line-height:58px;text-align:center">EF</div><div class="b" style="left:2139px;top:1876px;width:50px;height:50px;background:#f3deb6;border-radius:50%;color:#475467;font-size:24px;line-height:55px;text-align:center">AK</div><div class="t" style="left:2330px;top:1887.3px;font-size:28px;line-height:28px;color:#c43a2b;font-weight:400;letter-spacing:0px;">Nov 28, 2024 12:00 AM</div><svg class="b" style="left:2673px;top:1882px;" width="36" height="36" viewBox="0 0 24 24" fill="none"><path d="M4 20.5 L4.8 16 L16.5 4.3 A2.2 2.2 0 0 1 19.7 7.5 L8 19.2 Z M14.5 6.3 L17.7 9.5" stroke="#667085" stroke-width="1.7" stroke-linejoin="round"/></svg><svg class="b" style="left:2740px;top:1882px;" width="30" height="34" viewBox="0 0 30 34" fill="none"><path d="M2.2 9.8 H27.8 M9.5 9.8 V7 A3.3 3.3 0 0 1 12.8 3.7 H17.2 A3.3 3.3 0 0 1 20.5 7 V9.8 M4.7 9.8 V27.5 A4.3 4.3 0 0 0 9 31.8 H21 A4.3 4.3 0 0 0 25.3 27.5 V9.8 M12.3 16.3 V24.6 M17.7 16.3 V24.6" stroke="#667085" stroke-width="2.1" stroke-linecap="round" stroke-linejoin="round"/></svg><div class="b" style="left:471px;top:2028px;width:2346px;height:2px;background:#edeef2"></div><div class="b" style="left:497px;top:1969px;width:32px;height:32px;background:#fff;border:2px solid #d0d5dd;border-radius:8px"></div><svg class="b" style="left:596px;top:1964px;" width="44" height="44" viewBox="0 0 44 44" fill="none"><circle cx="22" cy="22" r="20.1" stroke="#98a2b3" stroke-width="3.6"/><path d="M13.4 21.8 L18.9 27.4 L30.8 15.8" stroke="#98a2b3" stroke-width="3.5" stroke-linecap="round" stroke-linejoin="round"/></svg><div class="t" style="left:717px;top:1969.5px;font-size:29px;line-height:29px;color:#101828;font-weight:400;letter-spacing:0.25px;">Follow with Marian Ritchie</div><div class="t" style="left:1217px;top:1969.5px;font-size:29px;line-height:29px;color:#101828;font-weight:400;letter-spacing:0.65px;">follow up</div><div class="b" style="left:1599px;top:1957px;width:58px;height:58px;background:#c8e6fb;border-radius:50%;color:#475467;font-size:23px;line-height:58px;text-align:center">MR</div><div class="b" style="left:2139px;top:1962px;width:50px;height:50px;background:#f3deb6;border-radius:50%;color:#475467;font-size:24px;line-height:55px;text-align:center">AK</div><div class="t" style="left:2330px;top:1973.3px;font-size:28px;line-height:28px;color:#c43a2b;font-weight:400;letter-spacing:0px;">Nov 28, 2024 12:00 AM</div><svg class="b" style="left:2673px;top:1968px;" width="36" height="36" viewBox="0 0 24 24" fill="none"><path d="M4 20.5 L4.8 16 L16.5 4.3 A2.2 2.2 0 0 1 19.7 7.5 L8 19.2 Z M14.5 6.3 L17.7 9.5" stroke="#667085" stroke-width="1.7" stroke-linejoin="round"/></svg><svg class="b" style="left:2740px;top:1968px;" width="30" height="34" viewBox="0 0 30 34" fill="none"><path d="M2.2 9.8 H27.8 M9.5 9.8 V7 A3.3 3.3 0 0 1 12.8 3.7 H17.2 A3.3 3.3 0 0 1 20.5 7 V9.8 M4.7 9.8 V27.5 A4.3 4.3 0 0 0 9 31.8 H21 A4.3 4.3 0 0 0 25.3 27.5 V9.8 M12.3 16.3 V24.6 M17.7 16.3 V24.6" stroke="#667085" stroke-width="2.1" stroke-linecap="round" stroke-linejoin="round"/></svg></div></div><div class="b" style="left:691px;top:528px;width:2px;height:1502px;background:#edeef2"></div><div class="b" style="left:1191px;top:528px;width:2px;height:1502px;background:#edeef2"></div><div class="b" style="left:1573px;top:528px;width:2px;height:1502px;background:#edeef2"></div><div class="b" style="left:2109px;top:528px;width:2px;height:1502px;background:#edeef2"></div><div class="b" style="left:2311px;top:528px;width:2px;height:1502px;background:#edeef2"></div><div class="b" style="left:2633px;top:528px;width:2px;height:1502px;background:#edeef2"></div><div class="b" style="left:2813px;top:528px;width:2px;height:1502px;background:#edeef2"></div><div class="b" style="left:473px;top:528px;width:2342px;height:82px;background:#fcfcfd;border-radius:8px 8px 0 0"></div><div class="b" style="left:691px;top:528px;width:2px;height:82px;background:#edeef2"></div><div class="b" style="left:1191px;top:528px;width:2px;height:82px;background:#edeef2"></div><div class="b" style="left:1573px;top:528px;width:2px;height:82px;background:#edeef2"></div><div class="b" style="left:2109px;top:528px;width:2px;height:82px;background:#edeef2"></div><div class="b" style="left:2311px;top:528px;width:2px;height:82px;background:#edeef2"></div><div class="b" style="left:2633px;top:528px;width:2px;height:82px;background:#edeef2"></div><div class="b" style="left:471px;top:610px;width:2346px;height:2px;background:#edeef2"></div><div class="b" style="left:497px;top:555px;width:32px;height:32px;background:#fff;border:2px solid #d0d5dd;border-radius:8px"></div><div class="t" style="left:578px;top:556.3px;font-size:28px;line-height:28px;color:#475467;font-weight:400;letter-spacing:0.72px;-webkit-text-stroke:0.35px #475467;">Status</div><div class="t" style="left:718px;top:556.3px;font-size:28px;line-height:28px;color:#475467;font-weight:400;letter-spacing:1.21px;-webkit-text-stroke:0.35px #475467;">Title</div><svg class="b" style="left:1135px;top:556px;" width="24" height="28" viewBox="0 0 24 28" fill="none"><path d="M7 10 L12 5 L17 10 M7 16 L12 21 L17 16" stroke="#667085" stroke-width="2" stroke-linecap="round" stroke-linejoin="round"/></svg><div class="t" style="left:1217px;top:556.3px;font-size:28px;line-height:28px;color:#475467;font-weight:400;letter-spacing:1.25px;-webkit-text-stroke:0.35px #475467;">Description</div><div class="t" style="left:1600px;top:556.3px;font-size:28px;line-height:28px;color:#475467;font-weight:400;letter-spacing:1.08px;-webkit-text-stroke:0.35px #475467;">Associated Contacts</div><div class="t" style="left:2136px;top:556.3px;font-size:28px;line-height:28px;color:#475467;font-weight:400;letter-spacing:1.12px;-webkit-text-stroke:0.35px #475467;">Assignee</div><div class="t" style="left:2338px;top:556.3px;font-size:28px;line-height:28px;color:#475467;font-weight:400;letter-spacing:0.22px;-webkit-text-stroke:0.35px #475467;">Due Date ( IST )</div><div class="b" style="left:2557px;top:547px;width:44px;height:44px;background:#eff5fe;border-radius:50%"></div><svg class="b" style="left:2567px;top:557px;" width="24" height="24" viewBox="0 0 24 24" fill="none"><path d="M12 5.5 V18.5 M7 13.5 L12 18.5 L17 13.5" stroke="#3b82f6" stroke-width="1.9" stroke-linecap="round" stroke-linejoin="round"/></svg><div class="t" style="left:2660px;top:556.3px;font-size:28px;line-height:28px;color:#475467;font-weight:400;letter-spacing:1.16px;-webkit-text-stroke:0.35px #475467;">Actions</div><div class="b" style="left:471px;top:2030px;width:2346px;height:2px;background:#edeef2"></div><div class="b" style="left:473px;top:2032px;width:2342px;height:83px;background:#fcfcfd;border-radius:0 0 8px 8px"></div><div class="t" style="left:494px;top:2060.3px;font-size:28px;line-height:28px;color:#344054;font-weight:400;letter-spacing:0.52px;">Page 1 of 443</div><div class="b" style="left:2179px;top:2042px;width:158px;height:64px;background:#fff;border:2px solid #e4e7ec;border-radius:12px;box-shadow:0 1px 2px rgba(16,24,40,.05)"></div><div class="t" style="left:2205px;top:2060.3px;font-size:28px;line-height:28px;color:#344054;font-weight:400;letter-spacing:0px;-webkit-text-stroke:0.3px #344054;">20</div><svg class="b" style="left:2285px;top:2060px;" width="28" height="28" viewBox="0 0 24 24" fill="none"><path d="M4.5 8.5 L12 15.5 L19.5 8.5" stroke="#667085" stroke-width="2.3" stroke-linecap="round" stroke-linejoin="round"/></svg><div class="b" style="left:2354px;top:2042px;width:161px;height:64px;background:#fafafa;border:2px solid #eceef1;border-radius:12px"></div><svg class="b" style="left:2381px;top:2058px;" width="32" height="32" viewBox="0 0 24 24" fill="none"><path d="M21 12 H4 M10.5 5 L3.5 12 L10.5 19" stroke="#737373" stroke-width="2.3" stroke-linecap="round" stroke-linejoin="round"/></svg><div class="t" style="left:2431px;top:2060.3px;font-size:28px;line-height:28px;color:#9ca3af;font-weight:400;letter-spacing:0px;-webkit-text-stroke:0.3px #9ca3af;">Prev</div><div class="b" style="left:2538px;top:2042px;width:64px;height:64px;background:#fff;border:2px solid #3b82f6;border-radius:9px;color:#1f4fd9;font-size:29px;line-height:60px;text-align:center;-webkit-text-stroke:0.3px #1f4fd9">1</div><div class="b" style="left:2625px;top:2042px;width:165px;height:64px;background:#fff;border:2px solid #e4e7ec;border-radius:12px;box-shadow:0 1px 2px rgba(16,24,40,.05)"></div><div class="t" style="left:2652px;top:2060.3px;font-size:28px;line-height:28px;color:#344054;font-weight:400;letter-spacing:0.94px;-webkit-text-stroke:0.35px #344054;">Next</div><svg class="b" style="left:2729px;top:2058px;" width="32" height="32" viewBox="0 0 24 24" fill="none"><path d="M3 12 H21 M14 4.8 L21 12 L14 19.2" stroke="#000" stroke-width="2.5" stroke-linecap="round" stroke-linejoin="round"/></svg><div class="b" style="left:415px;top:2050px;width:40px;height:40px;background:#66d09c;border-radius:50%"></div><svg class="b" style="left:422px;top:2058px;" width="24" height="24" viewBox="0 0 24 24" fill="none"><path d="M15 4 L7.5 12 L15 20" stroke="#1f5e45" stroke-width="3.4" stroke-linecap="round" stroke-linejoin="round"/></svg>
</div></div>
</body></html>
